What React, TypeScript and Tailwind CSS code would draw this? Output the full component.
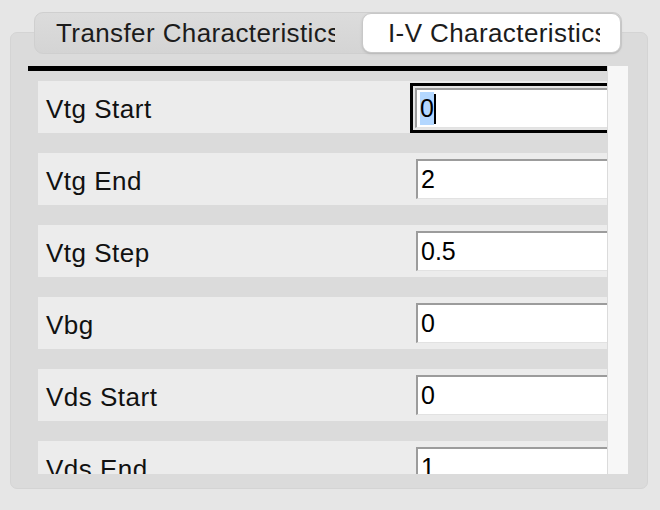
import React from 'react';

const rows = [
  { label: 'Vtg Start', value: '0', focused: true },
  { label: 'Vtg End', value: '2' },
  { label: 'Vtg Step', value: '0.5' },
  { label: 'Vbg', value: '0' },
  { label: 'Vds Start', value: '0' },
  { label: 'Vds End', value: '1' },
];

function Field({ value, focused }: { value: string; focused?: boolean }) {
  const box = (
    <div className="flex h-[40px] w-[200px] items-center border-t-2 border-l-2 border-b border-r border-t-[#9c9c9c] border-l-[#9c9c9c] border-b-[#e2e2e2] border-r-[#e2e2e2] bg-white pl-[3px] text-[25px] leading-none text-black">
      {focused ? (
        <>
          <span className="bg-[#b3d7ff] py-[4px]">{value}</span>
          <span className="h-[30px] w-[2px] bg-black" />
        </>
      ) : (
        <span>{value}</span>
      )}
    </div>
  );
  if (!focused) return <div className="ml-[378px] mt-[6px]">{box}</div>;
  return (
    <div className="ml-[372px] mt-[2px] border-[3px] border-black bg-[#e4e4e4] p-[2px]">{box}</div>
  );
}

export default function App() {
  return (
    <div
      className="h-[510px] w-[660px] overflow-hidden bg-[#e6e6e6] pt-[12px]"
      style={{ fontFamily: '"Liberation Sans", Arial, sans-serif' }}
    >
      {/* segmented tabs */}
      <div className="relative z-10 ml-[34px] flex h-[42px] w-[588px] rounded-[9px] border border-[#cfcfcf] bg-gradient-to-b from-[#dcdcdc] to-[#d4d4d4] text-[26px] tracking-[0.4px] text-[#1c1c1c]">
        <div className="flex w-[327px] items-center overflow-hidden whitespace-nowrap pl-[21px] pt-[1px]">
          <span className="block w-[279px] overflow-hidden">Transfer Characteristics</span>
        </div>
        <div className="flex flex-1 items-center overflow-hidden whitespace-nowrap rounded-[9px] border border-[#c8c8c8] bg-white pl-[25px] pt-[1px] shadow-sm">
          <span className="block w-[212px] overflow-hidden">I-V Characteristics</span>
        </div>
      </div>

      {/* panel */}
      <div className="-mt-[22px] ml-[10px] h-[457px] w-[638px] rounded-[7px] border border-[#d4d4d4] bg-[#dbdbdb] pt-[33px]">
        <div className="ml-[17px] flex h-[408px]">
          <div className="w-[579px] overflow-hidden">
            <div className="h-[5px] w-full bg-black" />
            <div className="flex flex-col gap-[20px] pt-[10px] pl-[10px]">
              {rows.map((r) => (
                <div key={r.label} className="flex h-[52px] shrink-0 bg-[#ececec]">
                  <div className="flex w-0 items-center pt-[4px]">
                    <span className="whitespace-nowrap pl-[8px] text-[26px] tracking-[0.5px] text-[#111]">{r.label}</span>
                  </div>
                  <Field value={r.value} focused={r.focused} />
                </div>
              ))}
            </div>
          </div>
          <div className="ml-[1px] h-full w-[20px] bg-[#f7f7f7]" />
        </div>
      </div>
    </div>
  );
}
